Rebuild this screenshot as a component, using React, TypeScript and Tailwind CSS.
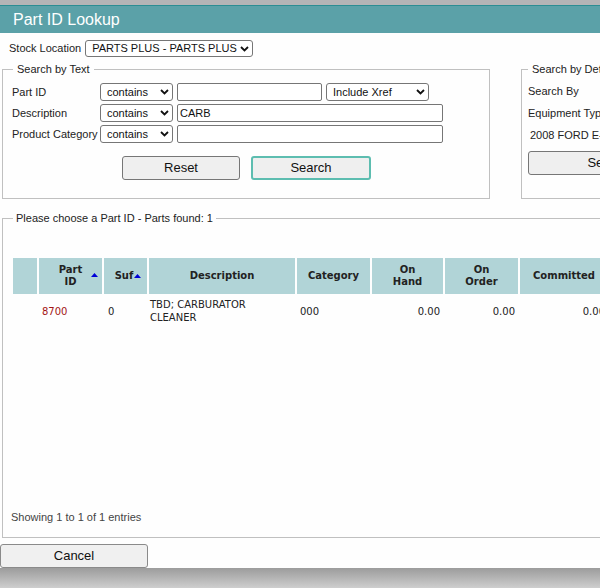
import React from 'react';

const Chevron = () => (
  <svg width="9" height="6" viewBox="0 0 9 6">
    <path d="M1 1l3.5 3.5L8 1" stroke="#111" strokeWidth="1.8" fill="none" />
  </svg>
);

const SortUp = () => (
  <svg width="7" height="4" viewBox="0 0 7 4">
    <path d="M0 4L3.5 0L7 4z" fill="#0000d8" />
  </svg>
);

interface SelProps {
  text: string;
  className: string;
}

const FakeSelect: React.FC<SelProps> = ({ text, className }) => (
  <div
    className={`flex items-center justify-between border border-[#767676] rounded-[3px] bg-white pl-[6px] pr-[3px] text-[#111] ${className}`}
  >
    <span>{text}</span>
    <Chevron />
  </div>
);

const TextBox: React.FC<{ value?: string; className: string }> = ({ value, className }) => (
  <div className={`flex items-center border border-[#767676] rounded-[2px] bg-white px-[2px] text-[#111] ${className}`}>
    {value}
  </div>
);

const columns = [
  { key: 'blank', w: 'w-[24px]' },
  { key: 'part', w: 'w-[63px]' },
  { key: 'suf', w: 'w-[43px]' },
  { key: 'desc', w: 'w-[146px]' },
  { key: 'cat', w: 'w-[73px]' },
  { key: 'hand', w: 'w-[71px]' },
  { key: 'order', w: 'w-[73px]' },
  { key: 'comm', w: 'w-[88px]' },
];

export default function App() {
  return (
    <div className="w-[600px] h-[588px] overflow-hidden bg-[#b4b4b6] font-['Liberation_Sans',Arial,sans-serif] text-[11px] text-[#222]">
      <div className="h-[5px]" />
      <div className="w-[760px]">
        {/* Title bar */}
        <div className="h-[28px] border-t border-[#2c8d93] bg-[#5ba1a8] text-white text-[16px] pl-[13px] flex items-center">
          Part ID Lookup
        </div>

        {/* Body */}
        <div className="h-[535px] bg-[#fefefe] flex flex-col">
          {/* Stock location */}
          <div className="mt-[7px] ml-[9px] flex items-center gap-[4px]">
            <span>Stock Location</span>
            <FakeSelect text="PARTS PLUS - PARTS PLUS" className="w-[168px] h-[17px]" />
          </div>

          {/* Search fieldsets */}
          <div className="mt-[6px] ml-[2px] flex gap-[31px]">
            <fieldset className="w-[488px] border border-[#c0c0c0] p-0 m-0">
              <legend className="ml-[10px] px-[4px] leading-[13px]">Search by Text</legend>
              <div className="pt-[7px] pb-[18px] pl-[9px]">
                <div className="flex flex-col gap-[3px]">
                  <div className="flex items-center h-[18px]">
                    <span className="w-[88px]">Part ID</span>
                    <FakeSelect text="contains" className="w-[73px] h-[18px]" />
                    <TextBox className="w-[145px] h-[18px] ml-[4px]" />
                    <FakeSelect text="Include Xref" className="w-[103px] h-[18px] ml-[4px]" />
                  </div>
                  <div className="flex items-center h-[18px]">
                    <span className="w-[88px]">Description</span>
                    <FakeSelect text="contains" className="w-[73px] h-[18px]" />
                    <TextBox value="CARB" className="w-[266px] h-[18px] ml-[4px]" />
                  </div>
                  <div className="flex items-center h-[18px]">
                    <span className="w-[88px] whitespace-nowrap">Product Category</span>
                    <FakeSelect text="contains" className="w-[73px] h-[18px]" />
                    <TextBox className="w-[266px] h-[18px] ml-[4px]" />
                  </div>
                </div>
                <div className="mt-[13px] ml-[110px] flex gap-[11px]">
                  <div className="w-[118px] h-[24px] flex items-center justify-center bg-[#efefef] border border-[#767676] rounded-[3px] text-[13px] text-[#111]">
                    Reset
                  </div>
                  <div className="w-[120px] h-[24px] flex items-center justify-center bg-[#efefef] border-2 border-[#5dbdb0] rounded-[3px] text-[13px] text-[#111]">
                    Search
                  </div>
                </div>
              </div>
            </fieldset>

            <fieldset className="w-[220px] border border-[#c0c0c0] p-0 m-0">
              <legend className="ml-[6px] px-[4px] leading-[13px] whitespace-nowrap">Search by Details</legend>
              <div className="pl-[6px] pt-[8px] flex flex-col">
                <div className="h-[14px] flex items-center">Search By</div>
                <div className="h-[14px] mt-[8px] flex items-center">Equipment Type</div>
                <div className="h-[14px] mt-[8px] ml-[2px] flex items-center whitespace-nowrap">2008 FORD E-350 VAN</div>
                <div className="mt-[9px] w-[160px] h-[24px] flex items-center justify-center bg-[#efefef] border border-[#767676] rounded-[3px] text-[13px] text-[#111]">
                  Search
                </div>
              </div>
            </fieldset>
          </div>

          {/* Results */}
          <fieldset className="mt-[13px] ml-[2px] w-[740px] border border-[#c0c0c0] p-0 m-0">
            <legend className="ml-[10px] px-[3px] leading-[13px]">Please choose a Part ID - Parts found: 1</legend>
            <div className="h-[312px] flex flex-col pl-[8px]">
              <div className="mt-[33px] ml-[2px] font-['DejaVu_Sans',Verdana,sans-serif] text-[10px] text-[#222]">
                {/* Header */}
                <div className="flex gap-[2px] h-[36px] font-bold leading-[12px]">
                  <div className={`${columns[0].w} bg-[#b1d4d7]`} />
                  <div className={`${columns[1].w} bg-[#b1d4d7] relative flex items-center justify-center text-center`}>
                    <span>Part<br />ID</span>
                    <span className="absolute right-[4px] top-[15px] flex"><SortUp /></span>
                  </div>
                  <div className={`${columns[2].w} bg-[#b1d4d7] relative flex items-center justify-center`}>
                    <span className="mr-[3px]">Suf</span>
                    <span className="absolute right-[6px] top-[16px] flex"><SortUp /></span>
                  </div>
                  <div className={`${columns[3].w} bg-[#b1d4d7] flex items-center justify-center`}>Description</div>
                  <div className={`${columns[4].w} bg-[#b1d4d7] flex items-center justify-center`}>Category</div>
                  <div className={`${columns[5].w} bg-[#b1d4d7] flex items-center justify-center text-center`}>
                    On<br />Hand
                  </div>
                  <div className={`${columns[6].w} bg-[#b1d4d7] flex items-center justify-center text-center`}>
                    On<br />Order
                  </div>
                  <div className={`${columns[7].w} bg-[#b1d4d7] flex items-center justify-center`}>Committed</div>
                </div>

                {/* Row */}
                <div className="flex gap-[2px] pt-[4px] leading-[13px] items-center">
                  <div className={columns[0].w} />
                  <div className={`${columns[1].w} pl-[3px] text-[#a31515]`}>8700</div>
                  <div className={`${columns[2].w} pl-[4px]`}>0</div>
                  <div className={`${columns[3].w} pl-[1px]`}>
                    TBD; CARBURATOR<br />CLEANER
                  </div>
                  <div className={`${columns[4].w} pl-[3px]`}>000</div>
                  <div className={`${columns[5].w} pr-[3px] text-right`}>0.00</div>
                  <div className={`${columns[6].w} pr-[3px] text-right`}>0.00</div>
                  <div className={`${columns[7].w} pr-[3px] text-right`}>0.00</div>
                </div>
              </div>

              <div className="mt-auto mb-[13px] leading-[13px] text-[#444]">Showing 1 to 1 of 1 entries</div>
            </div>
          </fieldset>

          {/* Cancel */}
          <div className="mt-[6px] w-[148px] h-[24px] flex items-center justify-center bg-[#f0f0f0] border border-[#8a8a8a] rounded-[3px] text-[13px] text-[#111]">
            Cancel
          </div>
        </div>
      </div>
      <div className="h-[20px] bg-gradient-to-b from-[#9c9c9c] to-[#cecece]" />
    </div>
  );
}
